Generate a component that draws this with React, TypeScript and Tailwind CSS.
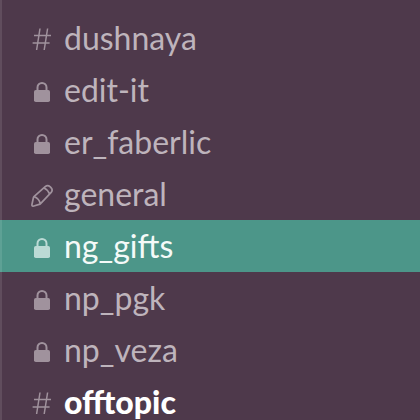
type Kind = "hash" | "lock" | "pencil";
type State = "read" | "selected" | "unread";

interface Channel {
  name: string;
  kind: Kind;
  state: State;
}

const channels: Channel[] = [
  { name: "dushnaya", kind: "hash", state: "read" },
  { name: "edit-it", kind: "lock", state: "read" },
  { name: "er_faberlic", kind: "lock", state: "read" },
  { name: "general", kind: "pencil", state: "read" },
  { name: "ng_gifts", kind: "lock", state: "selected" },
  { name: "np_pgk", kind: "lock", state: "read" },
  { name: "np_veza", kind: "lock", state: "read" },
  { name: "offtopic", kind: "hash", state: "unread" },
];

const rowStyle: Record<State, string> = {
  read: "text-[#beb4bc]",
  selected: "bg-[#4c9689] text-[#f4faf8]",
  unread: "font-black text-white",
};

const iconStyle: Record<State, string> = {
  read: "text-[#a0929d]",
  selected: "text-[#bbdad5]",
  unread: "text-[#a0929d]",
};

function ChannelIcon({ kind }: { kind: Kind }) {
  return (
    <svg viewBox="0 0 24 28" className="block h-7 w-6" fill="none" stroke="currentColor" aria-hidden="true">
      {kind === "hash" && (
        <path d="M10 4.5 6.6 26M17.6 4.5 14.2 26M4 11.5h17M2.6 19h17" strokeWidth="1.5" />
      )}
      {kind === "lock" && (
        <>
          <path d="M7.5 15V11.5a4.5 4.5 0 0 1 9 0V15" strokeWidth="2" />
          <rect x="4" y="14" width="16" height="12" rx="1.8" fill="currentColor" stroke="none" />
        </>
      )}
      {kind === "pencil" && (
        <path
          d="M2 24.2 3.4 17.8Q3.6 17 4.2 16.4L15.2 6.6Q17.6 4.6 20 6.6L21 7.6Q23.2 10 21.2 12.4L10.6 23.6Q10 24.2 9.2 24.4L3 26.2Q1.6 26.2 2 24.2ZM4.2 16.8Q9 18.4 10.2 23.6M14 8Q17.8 9.6 19.4 13.8"
          strokeWidth="1.7"
          strokeLinejoin="round"
        />
      )}
    </svg>
  );
}

export default function App() {
  return (
    <nav
      aria-label="Channels"
      className="relative h-screen overflow-hidden bg-[#4e394b] pt-3 font-[Lato,sans-serif] text-[32px] leading-9"
    >
      <ul>
        {channels.map(({ name, kind, state }) => (
          <li key={name}>
            <a
              href={`#${name}`}
              aria-current={state === "selected" ? "page" : undefined}
              className={`flex h-[52px] items-center gap-2.5 pl-[30px] ${rowStyle[state]}`}
            >
              <span className={iconStyle[state]}>
                <ChannelIcon kind={kind} />
              </span>
              <span>{name}</span>
            </a>
          </li>
        ))}
      </ul>
      <span className="pointer-events-none absolute inset-y-0 left-0 w-0.5 bg-white/10" />
    </nav>
  );
}
